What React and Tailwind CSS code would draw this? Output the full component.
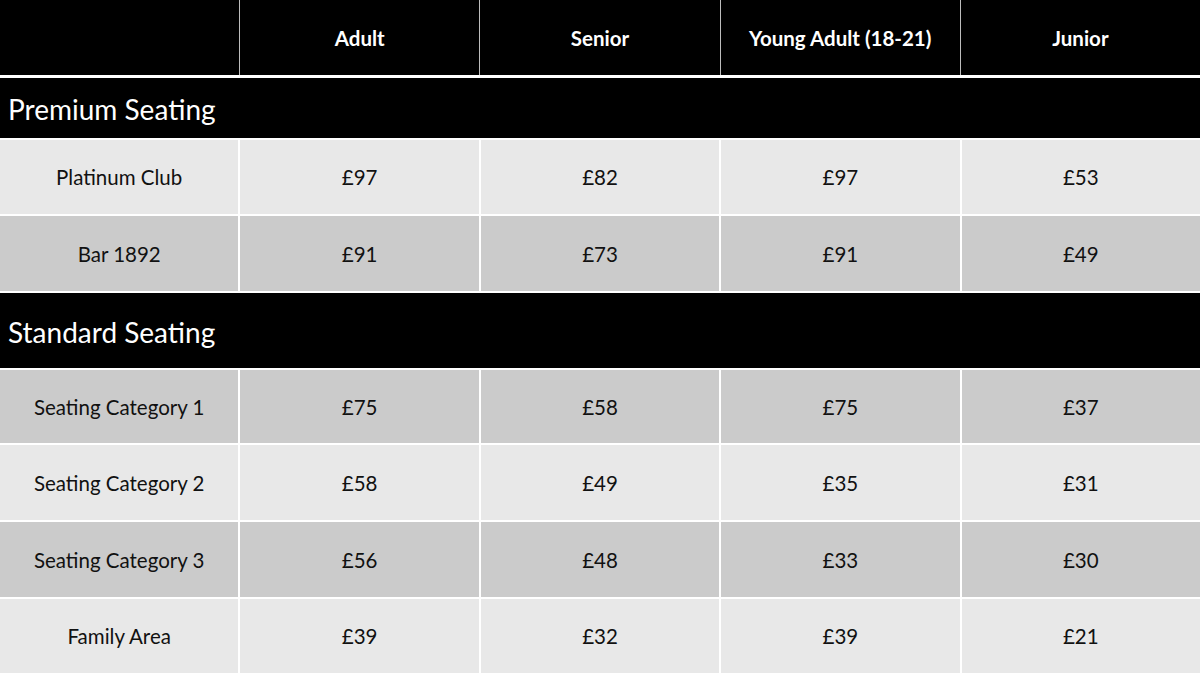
import React from "react";

const cols = ["Adult", "Senior", "Young Adult (18-21)", "Junior"];

const sections = [
  {
    title: "Premium Seating",
    h: "h-[60px]",
    rows: [
      { name: "Platinum Club", v: ["£97", "£82", "£97", "£53"], bg: "bg-[#e8e8e8]", h: "h-[74px]" },
      { name: "Bar 1892", v: ["£91", "£73", "£91", "£49"], bg: "bg-[#cbcbcb]", h: "h-[75px]" },
    ],
  },
  {
    title: "Standard Seating",
    h: "h-[75px]",
    rows: [
      { name: "Seating Category 1", v: ["£75", "£58", "£75", "£37"], bg: "bg-[#cbcbcb]", h: "h-[73px]" },
      { name: "Seating Category 2", v: ["£58", "£49", "£35", "£31"], bg: "bg-[#e8e8e8]", h: "h-[75px]" },
      { name: "Seating Category 3", v: ["£56", "£48", "£33", "£30"], bg: "bg-[#cbcbcb]", h: "h-[75px]" },
      { name: "Family Area", v: ["£39", "£32", "£39", "£21"], bg: "bg-[#e8e8e8]", h: "h-[74px]" },
    ],
  },
];

export default function App() {
  return (
    <div
      className="w-[1200px] h-[673px] overflow-hidden bg-white flex flex-col gap-[2px]"
      style={{ fontFamily: "Lato, 'Open Sans', sans-serif" }}
    >
      <div className="grid grid-cols-5 gap-x-[1px] bg-[#bdbdbd] h-[75px] mb-[1px]">
        <div className="bg-black" />
        {cols.map((c) => (
          <div key={c} className="bg-black flex items-center justify-center text-white font-bold text-[20.5px] pt-[1px]">
            {c}
          </div>
        ))}
      </div>
      {sections.map((s) => (
        <React.Fragment key={s.title}>
          <div className={`bg-black ${s.h} flex items-center pl-[8px] text-white text-[28px] pt-[2px]`}>
            {s.title}
          </div>
          {s.rows.map((r) => (
            <div key={r.name} className={`grid grid-cols-5 gap-x-[2px] ${r.h}`}>
              <div className={`${r.bg} flex items-center justify-center text-[#111] text-[20.5px] pt-[1px]`}>{r.name}</div>
              {r.v.map((v, i) => (
                <div key={i} className={`${r.bg} flex items-center justify-center text-[#111] text-[20.5px] pt-[1px]`}>
                  {v}
                </div>
              ))}
            </div>
          ))}
        </React.Fragment>
      ))}
    </div>
  );
}
